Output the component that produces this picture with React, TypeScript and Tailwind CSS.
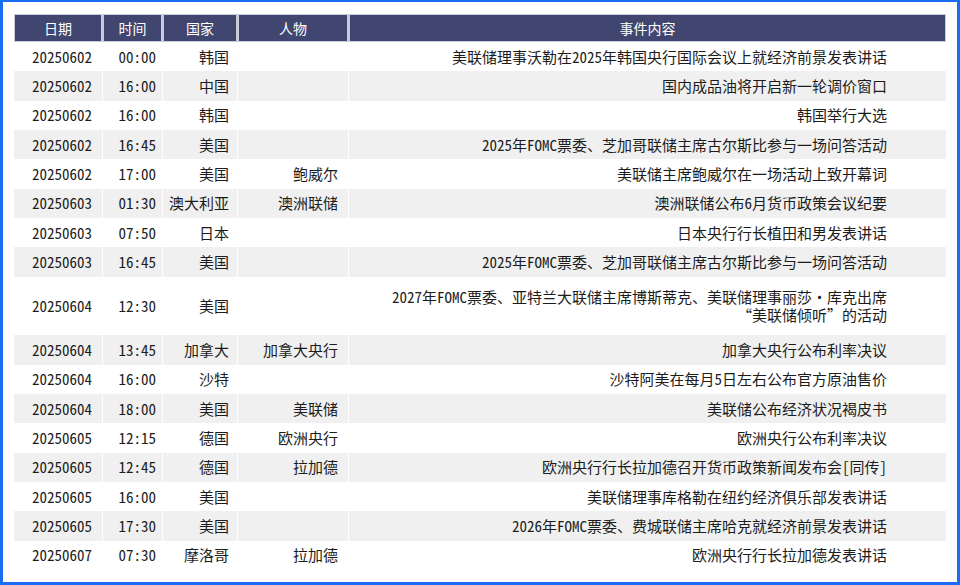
type Row = {
  date: string;
  time: string;
  country: string;
  person: string;
  event: string[];
};

const rows: Row[] = [
  { date: "20250602", time: "00:00", country: "韩国", person: "", event: ["美联储理事沃勒在2025年韩国央行国际会议上就经济前景发表讲话"] },
  { date: "20250602", time: "16:00", country: "中国", person: "", event: ["国内成品油将开启新一轮调价窗口"] },
  { date: "20250602", time: "16:00", country: "韩国", person: "", event: ["韩国举行大选"] },
  { date: "20250602", time: "16:45", country: "美国", person: "", event: ["2025年FOMC票委、芝加哥联储主席古尔斯比参与一场问答活动"] },
  { date: "20250602", time: "17:00", country: "美国", person: "鲍威尔", event: ["美联储主席鲍威尔在一场活动上致开幕词"] },
  { date: "20250603", time: "01:30", country: "澳大利亚", person: "澳洲联储", event: ["澳洲联储公布6月货币政策会议纪要"] },
  { date: "20250603", time: "07:50", country: "日本", person: "", event: ["日本央行行长植田和男发表讲话"] },
  { date: "20250603", time: "16:45", country: "美国", person: "", event: ["2025年FOMC票委、芝加哥联储主席古尔斯比参与一场问答活动"] },
  {
    date: "20250604",
    time: "12:30",
    country: "美国",
    person: "",
    event: ["2027年FOMC票委、亚特兰大联储主席博斯蒂克、美联储理事丽莎·库克出席", "“美联储倾听”的活动"],
  },
  { date: "20250604", time: "13:45", country: "加拿大", person: "加拿大央行", event: ["加拿大央行公布利率决议"] },
  { date: "20250604", time: "16:00", country: "沙特", person: "", event: ["沙特阿美在每月5日左右公布官方原油售价"] },
  { date: "20250604", time: "18:00", country: "美国", person: "美联储", event: ["美联储公布经济状况褐皮书"] },
  { date: "20250605", time: "12:15", country: "德国", person: "欧洲央行", event: ["欧洲央行公布利率决议"] },
  { date: "20250605", time: "12:45", country: "德国", person: "拉加德", event: ["欧洲央行行长拉加德召开货币政策新闻发布会[同传]"] },
  { date: "20250605", time: "16:00", country: "美国", person: "", event: ["美联储理事库格勒在纽约经济俱乐部发表讲话"] },
  { date: "20250605", time: "17:30", country: "美国", person: "", event: ["2026年FOMC票委、费城联储主席哈克就经济前景发表讲话"] },
  { date: "20250607", time: "07:30", country: "摩洛哥", person: "拉加德", event: ["欧洲央行行长拉加德发表讲话"] },
];

const cols = "grid grid-cols-[88px_59px_74px_110px_597px] gap-x-px";
const headers = ["日期", "时间", "国家", "人物", "事件内容"];

export default function App() {
  return (
    <div
      className="w-[960px] h-[585px] bg-white border-[#1b6cf2] border-t-2 border-l-[3px] border-r-[3px] border-b-[3px] pt-3 pl-[11px] overflow-hidden"
      style={{ fontFamily: '"Noto Sans Mono CJK SC", "Noto Sans CJK SC", sans-serif' }}
    >
      <div className="w-[932px] text-[15px] text-[#1c1c1c]">
        {/* header */}
        <div className={`${cols} h-[28px] bg-[#c9ccd8]`}>
          {headers.map((h) => (
            <div
              key={h}
              className="bg-[#404670] border border-[#c9ccd8] flex items-center justify-center text-white text-[14px] leading-none"
            >
              {h}
            </div>
          ))}
        </div>

        {/* body */}
        {rows.map((r, i) => {
          const tall = r.event.length > 1;
          const cell = `flex items-center justify-end leading-[18px] ${i % 2 === 1 ? "bg-[#f0f0f0]" : "bg-white"}`;
          return (
            <div key={i} className={`${cols} ${tall ? "h-[58.67px]" : "h-[29.33px]"}`}>
              <div className={`${cell} pr-[10px]`}>{r.date}</div>
              <div className={`${cell} pr-[6px]`}>{r.time}</div>
              <div className={`${cell} pr-[8px]`}>{r.country}</div>
              <div className={`${cell} pr-[10px]`}>{r.person}</div>
              <div className={`${cell} pr-[59px]`}>
                <div className="text-right">
                  {r.event.map((line, j) => (
                    <div key={j}>{line}</div>
                  ))}
                </div>
              </div>
            </div>
          );
        })}
      </div>
    </div>
  );
}
